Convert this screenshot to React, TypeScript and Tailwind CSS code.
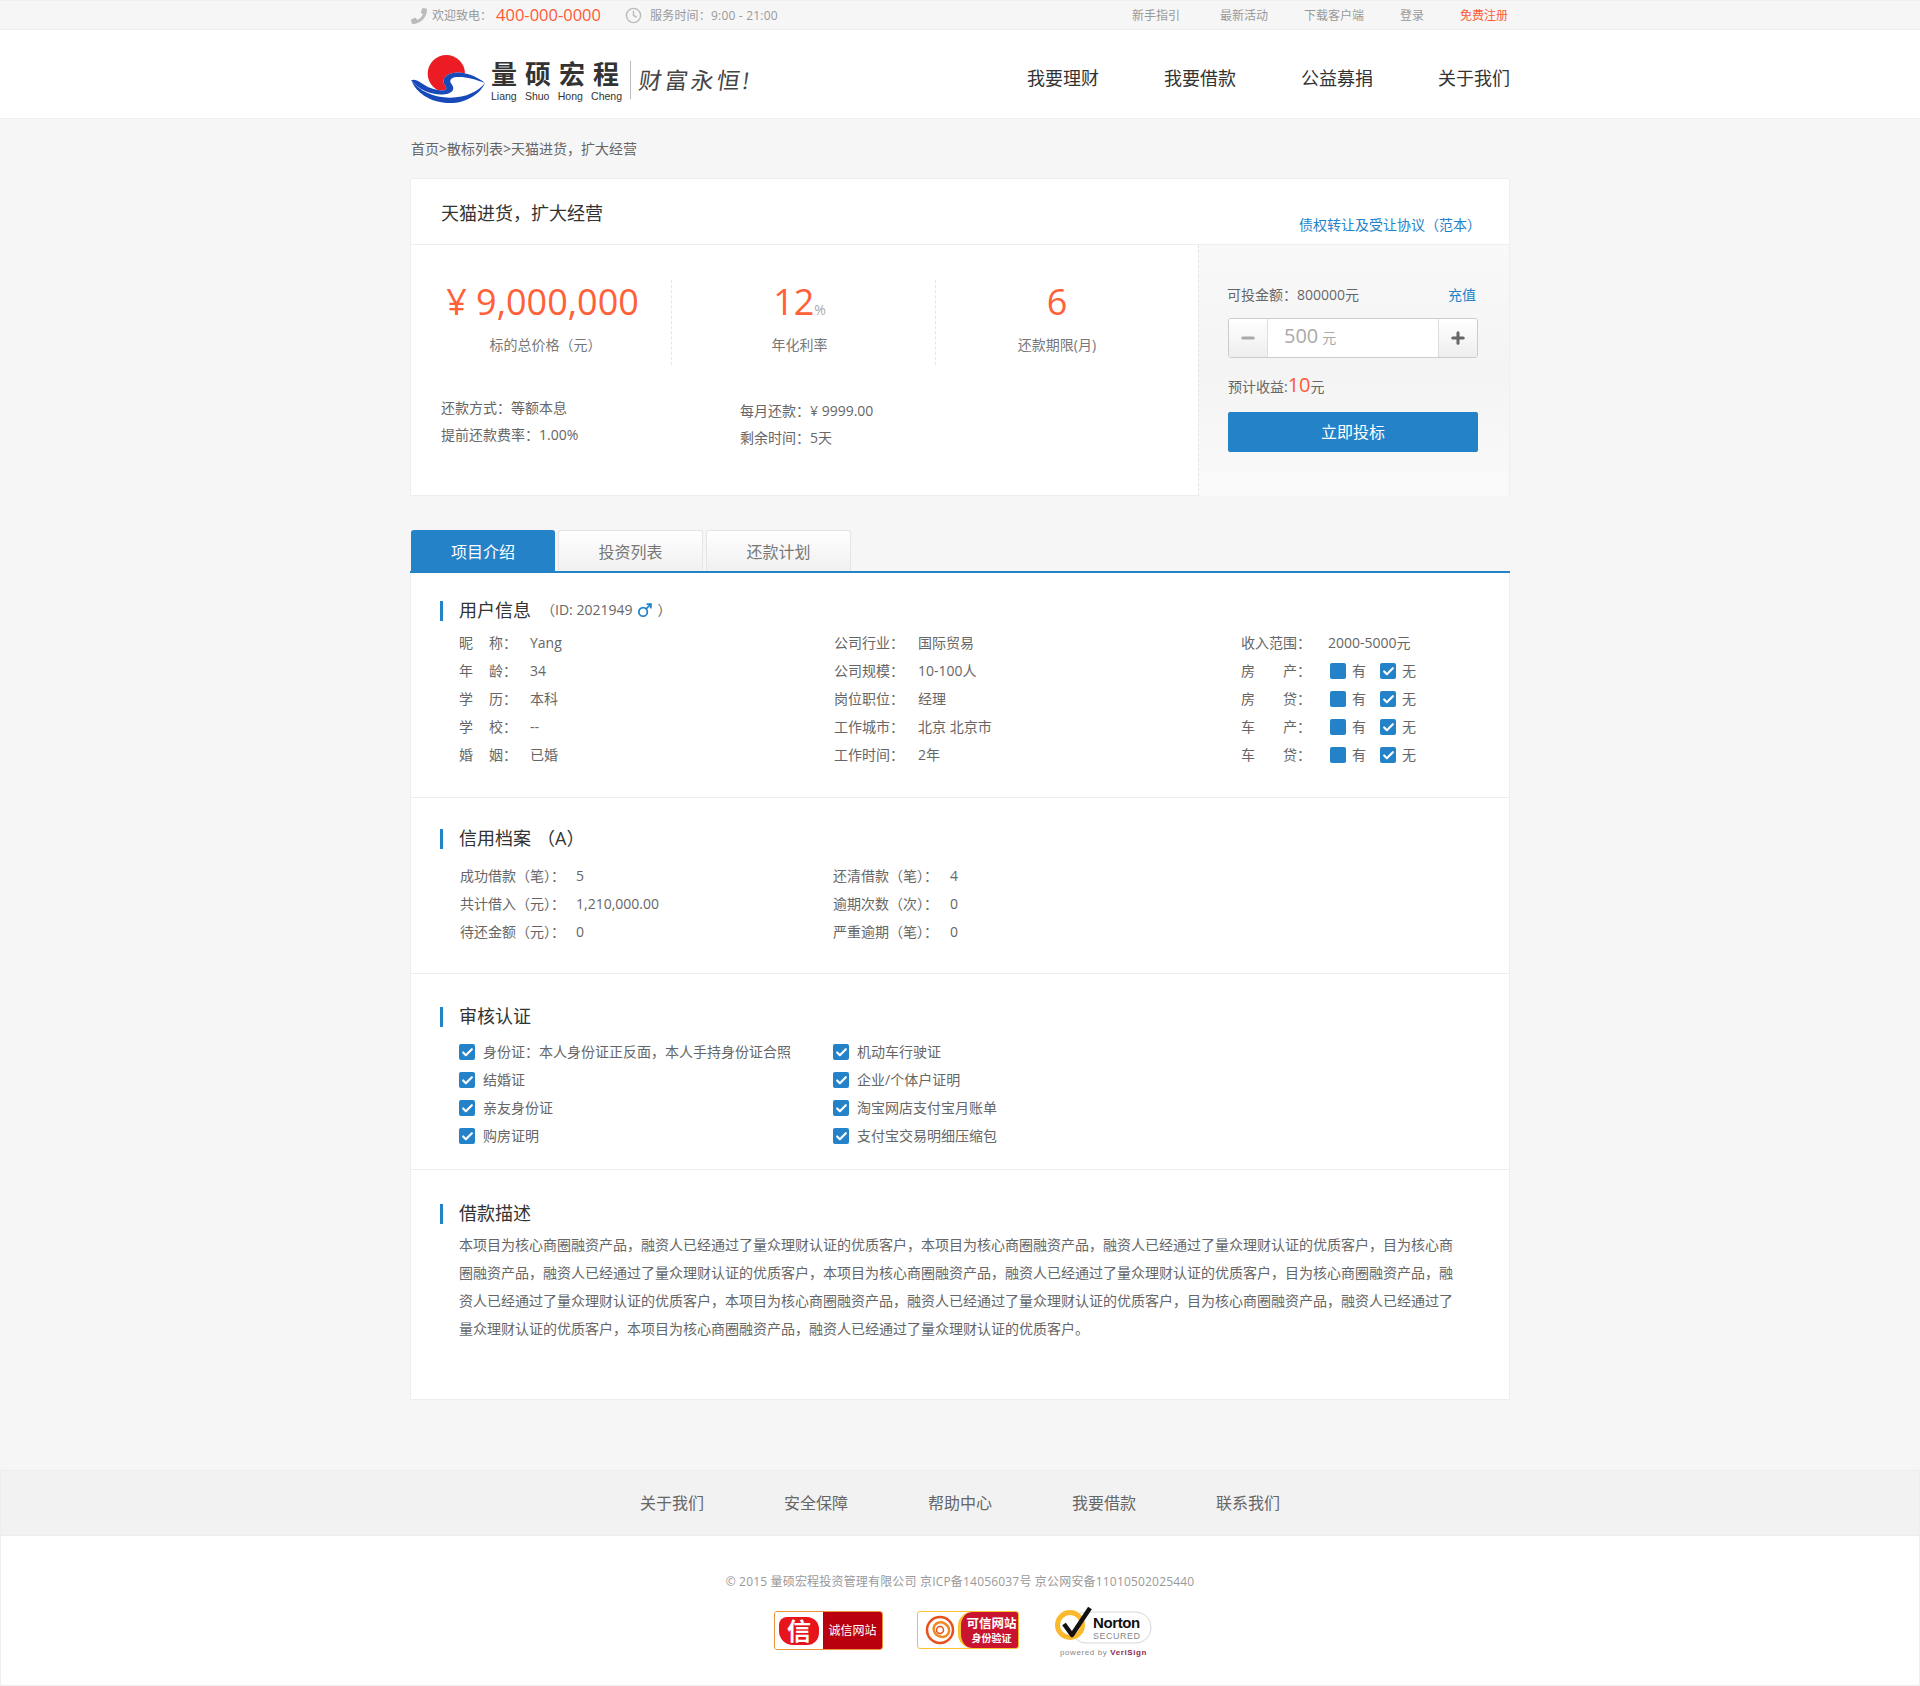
import { Check, Clock, Mars, Minus, Plus } from 'lucide-react';
import { FaPhoneAlt } from 'react-icons/fa';

const userLeft = [
  ['昵', '称：', 'Yang'],
  ['年', '龄：', '34'],
  ['学', '历：', '本科'],
  ['学', '校：', '--'],
  ['婚', '姻：', '已婚'],
];
const userMid = [
  ['公司行业：', '国际贸易'],
  ['公司规模：', '10-100人'],
  ['岗位职位：', '经理'],
  ['工作城市：', '北京 北京市'],
  ['工作时间：', '2年'],
];
const assets = [
  ['房', '产：'],
  ['房', '贷：'],
  ['车', '产：'],
  ['车', '贷：'],
];
const creditLeft = [
  ['成功借款（笔）：', '5'],
  ['共计借入（元）：', '1,210,000.00'],
  ['待还金额（元）：', '0'],
];
const creditRight = [
  ['还清借款（笔）：', '4'],
  ['逾期次数（次）：', '0'],
  ['严重逾期（笔）：', '0'],
];
const auditLeft = ['身份证：本人身份证正反面，本人手持身份证合照', '结婚证', '亲友身份证', '购房证明'];
const auditRight = ['机动车行驶证', '企业/个体户证明', '淘宝网店支付宝月账单', '支付宝交易明细压缩包'];
const desc =
  '本项目为核心商圈融资产品，融资人已经通过了量众理财认证的优质客户，本项目为核心商圈融资产品，融资人已经通过了量众理财认证的优质客户，目为核心商圈融资产品，融资人已经通过了量众理财认证的优质客户，本项目为核心商圈融资产品，融资人已经通过了量众理财认证的优质客户，目为核心商圈融资产品，融资人已经通过了量众理财认证的优质客户，本项目为核心商圈融资产品，融资人已经通过了量众理财认证的优质客户，目为核心商圈融资产品，融资人已经通过了量众理财认证的优质客户，本项目为核心商圈融资产品，融资人已经通过了量众理财认证的优质客户。';

const Box = ({ checked = true }: { checked?: boolean }) => (
  <span className="flex h-4 w-4 shrink-0 items-center justify-center rounded-[2px] bg-[#2482c9]">
    {checked && <Check size={13} strokeWidth={4} className="text-white" />}
  </span>
);

const SectionTitle = ({ children }: { children: React.ReactNode }) => (
  <div className="ml-[29px] flex h-5 items-center border-l-[3px] border-[#2482c9] pb-[2px] pl-4 text-lg text-[#333]">
    {children}
  </div>
);

const Logo = () => (
  <div className="mt-[12px] flex items-center">
    <svg width="75" height="50" viewBox="18 22 225 150">
      <circle cx="124" cy="78" r="56" fill="#ec1c24" />
      <path d="M18 98 C30 92 42 100 55 110 C75 124 100 130 118 128 C128 126 124 118 118 110 C110 96 120 78 150 75 C185 72 220 90 240 106 C240 135 180 170 125 166 C60 160 30 125 18 98 Z" fill="#fff" />
      <path d="M18 98 C30 92 42 100 55 110 C75 124 100 130 118 128 C128 126 124 118 118 110 C110 96 120 78 150 75 C185 72 220 90 240 106 C210 94 180 86 155 88 C135 90 132 100 140 110 C150 124 145 136 120 140 C85 144 45 130 18 98 Z" fill="#1749b8" />
      <path d="M20 100 C30 125 60 160 125 166 C180 170 225 140 240 106 C220 130 185 150 135 150 C85 150 45 130 20 100 Z" fill="#1749b8" />
    </svg>
    <div className="ml-[5px] w-[131px]">
      <div className="text-[26px] leading-[30px] font-bold tracking-[8px] whitespace-nowrap text-[#333]">量硕宏程</div>
      <div className="mt-px flex justify-between font-['Liberation_Sans',sans-serif] text-[10.5px] leading-3 text-[#333]">
        <span>Liang</span>
        <span>Shuo</span>
        <span>Hong</span>
        <span>Cheng</span>
      </div>
    </div>
    <div className="mx-2 h-[38px] w-px bg-[#bbb]" />
    <div className="skew-x-[-8deg] text-[23px] tracking-[3px] whitespace-nowrap text-[#444]">财富永恒!</div>
  </div>
);

const BadgeCredit = () => (
  <div className="flex h-[39px] w-[109px] overflow-hidden rounded-[3px] border border-[#f0923a]">
    <div className="flex w-[48px] items-center justify-center bg-white">
      <span className="flex h-[28px] w-[40px] items-center justify-center rounded-[8px_12px_12px_14px] bg-[#e8141c] text-[24px] leading-none font-bold text-white">
        信
      </span>
    </div>
    <div className="flex flex-1 items-center justify-center bg-[#b8000f] text-[12px] whitespace-nowrap text-white">诚信网站</div>
  </div>
);

const BadgeTrust = () => (
  <div className="flex h-[38px] w-[102px] overflow-hidden rounded-[3px] border border-[#fbc02d] bg-white">
    <div className="flex w-[40px] items-center justify-center pl-1">
      <svg width="30" height="30" viewBox="0 0 30 30" fill="none">
        <circle cx="15" cy="15" r="13" stroke="#e8501c" strokeWidth="2.5" />
        <ellipse cx="16" cy="14" rx="8" ry="7" stroke="#f08a24" strokeWidth="2.5" transform="rotate(30 15 15)" />
        <circle cx="15" cy="15" r="3.5" stroke="#e8501c" strokeWidth="1.5" />
      </svg>
    </div>
    <div className="flex flex-1 flex-col items-center justify-center rounded-l-[14px] border-l-[3px] border-[#fbc02d] bg-[#c8142e] pl-1 whitespace-nowrap text-white">
      <span className="text-[12.5px] leading-[16px] font-bold">可信网站</span>
      <span className="text-[10px] leading-[13px] font-bold">身份验证</span>
    </div>
  </div>
);

const BadgeNorton = () => (
  <div className="flex w-[97px] flex-col items-center">
    <svg width="97" height="42" viewBox="0 0 97 42">
      <rect x="16" y="7" width="80" height="31" rx="15" fill="#fff" stroke="#d8d8d8" />
      <circle cx="15" cy="20" r="12.5" fill="#fff" stroke="#fbb92d" strokeWidth="5" />
      <path d="M9 19 L17 30 L35 3" fill="none" stroke="#111" strokeWidth="4.5" strokeLinejoin="round" />
      <text x="38" y="22.5" fontFamily="Liberation Sans, sans-serif" fontSize="15" fontWeight="700" fill="#111" letterSpacing="-0.4">
        Norton
      </text>
      <text x="38" y="34" fontFamily="Liberation Sans, sans-serif" fontSize="9" fill="#888" letterSpacing="0.5">
        SECURED
      </text>
    </svg>
    <div className="mt-px font-['Liberation_Sans',sans-serif] text-[8px] leading-[10px] tracking-[0.6px] whitespace-nowrap text-[#888]">
      powered by <span className="font-bold text-[#8f2a55]">VeriSign</span>
    </div>
  </div>
);

export default function App() {
  return (
    <div className="min-h-[1686px] bg-[#f6f6f6] font-['Open_Sans','Noto_Sans_CJK_SC',sans-serif] text-[#666]">
      {/* Top bar */}
      <div className="h-[30px] border-y border-t-[#f0f0f0] border-b-[#eee] bg-[#f6f6f6]">
        <div className="mx-auto flex h-full w-[1100px] items-center pt-px pl-px text-xs text-[#999]">
          <FaPhoneAlt size={16} className="-scale-x-100 text-[#bbb]" />
          <span className="ml-[5px]">欢迎致电：</span>
          <span className="ml-[4px] text-[16.5px] leading-none text-[#ff5a36]">400-000-0000</span>
          <Clock size={17} strokeWidth={2} className="ml-6 text-[#bbb]" />
          <span className="ml-2 tracking-[0.2px]">服务时间：9:00 - 21:00</span>
          <div className="ml-auto flex pr-[2px]">
            <span>新手指引</span>
            <span className="ml-10">最新活动</span>
            <span className="ml-9">下载客户端</span>
            <span className="ml-9">登录</span>
            <span className="ml-9 text-[#ff5a36]">免费注册</span>
          </div>
        </div>
      </div>

      {/* Header */}
      <div className="h-[89px] border-b border-[#f0f0f0] bg-white">
        <div className="mx-auto flex h-full w-[1100px] items-center justify-between pl-px">
          <Logo />
          <div className="mt-[7px] flex gap-[65px] text-lg text-[#333]">
            <span>我要理财</span>
            <span>我要借款</span>
            <span>公益募捐</span>
            <span>关于我们</span>
          </div>
        </div>
      </div>

      <div className="mx-auto w-[1100px]">
        <div className="flex h-[59px] items-center pl-px text-sm text-[#666]">首页&gt;散标列表&gt;天猫进货，扩大经营</div>

        {/* Summary card */}
        <div className="h-[318px] border border-[#eee] bg-white">
          <div className="flex h-[66px] justify-between border-b border-[#eee] pl-[30px]">
            <h1 className="pt-[20px] text-lg text-[#333]">天猫进货，扩大经营</h1>
            <a className="pt-[36px] pr-[28px] text-sm text-[#2482c9]">债权转让及受让协议（范本）</a>
          </div>
          <div className="flex h-[251px]">
            <div className="w-[787px] pt-[35px]">
              <div className="flex h-[85px] text-center">
                <div className="w-[261px] border-r border-dashed border-[#e5e5e5] pl-[3px]">
                  <div className="text-4xl leading-[44px] text-[#ff6038]">¥ 9,000,000</div>
                  <div className="mt-[11px] pl-[6px] text-sm text-[#777]">标的总价格（元）</div>
                </div>
                <div className="w-[264px] border-r border-dashed border-[#e5e5e5] pr-[8px]">
                  <div className="text-4xl leading-[44px] text-[#ff6038]">
                    12<span className="text-sm text-[#aaa]">%</span>
                  </div>
                  <div className="mt-[11px] text-sm text-[#777]">年化利率</div>
                </div>
                <div className="w-[242px]">
                  <div className="text-4xl leading-[44px] text-[#ff6038]">6</div>
                  <div className="mt-[11px] text-sm text-[#777]">还款期限(月)</div>
                </div>
              </div>
              <div className="mt-[29px] flex text-sm text-[#666]">
                <div className="ml-[30px] w-[299px]">
                  <div className="leading-[27px]">还款方式：等额本息</div>
                  <div className="leading-[27px]">提前还款费率：1.00%</div>
                </div>
                <div className="mt-[3px]">
                  <div className="leading-[27px]">每月还款：¥ 9999.00</div>
                  <div className="leading-[27px]">剩余时间：5天</div>
                </div>
              </div>
            </div>
            <div className="flex-1 border-l border-dashed border-[#e5e5e5] bg-gradient-to-b from-[#f9f9f9] via-[#f4f4f4] to-[#fbfafa] pt-[40px] pr-[31px] pl-[29px]">
              <div className="flex items-center justify-between text-sm leading-[20px]">
                <span className="ml-[-1px]">可投金额：800000元</span>
                <span className="pr-[2px] text-[#2482c9]">充值</span>
              </div>
              <div className="mt-[13px] flex h-10 overflow-hidden rounded-[3px] border border-[#ccc] bg-white">
                <div className="flex w-[39px] items-center justify-center border-r border-[#ddd] bg-gradient-to-b from-white to-[#eee]">
                  <Minus size={18} strokeWidth={4} className="text-[#aaa]" />
                </div>
                <div className="flex flex-1 items-baseline pt-[3px] pl-[16px] text-[#aaa]">
                  <span className="text-xl">500</span>
                  <span className="ml-1 text-sm">元</span>
                </div>
                <div className="flex w-[39px] items-center justify-center border-l border-[#ddd] bg-gradient-to-b from-white to-[#eee]">
                  <Plus size={18} strokeWidth={4} className="text-[#666]" />
                </div>
              </div>
              <div className="mt-[15px] flex h-[24px] items-baseline text-sm">
                <span>预计收益:</span>
                <span className="text-xl leading-[24px] text-[#ff5a36]">10</span>
                <span>元</span>
              </div>
              <button className="mt-[15px] h-10 w-full rounded-[2px] bg-[#2482c9] text-base text-white">立即投标</button>
            </div>
          </div>
        </div>

        {/* Tabs */}
        <div className="mt-[34px] flex h-[43px] gap-[3px] border-b-2 border-[#2482c9] pl-px text-base">
          <div className="flex h-[41px] w-[144px] items-center justify-center rounded-t-[3px] bg-[#2482c9] pt-[2px] text-white">项目介绍</div>
          <div className="flex h-[41px] w-[145px] items-center justify-center rounded-t-[3px] border border-b-0 border-[#e5e5e5] bg-gradient-to-b from-white to-[#f0f0f0] pt-[2px] text-[#777]">投资列表</div>
          <div className="flex h-[41px] w-[145px] items-center justify-center rounded-t-[3px] border border-b-0 border-[#e5e5e5] bg-gradient-to-b from-white to-[#f0f0f0] pt-[2px] text-[#777]">还款计划</div>
        </div>

        {/* Detail panel */}
        <div className="h-[827px] border border-t-0 border-[#eee] bg-white text-sm text-[#666]">
          <section className="h-[225px] border-b border-[#eee] pt-[28px]">
            <SectionTitle>
              <span>用户信息</span>
              <span className="ml-[10px] flex items-center text-sm text-[#666]">
                （ID: 2021949
                <Mars size={17} strokeWidth={2.5} className="mx-[4px] text-[#2482c9]" />）
              </span>
            </SectionTitle>
            <div className="mt-2 ml-[48px] flex">
              <div className="w-[375px]">
                {userLeft.map(([a, b, v]) => (
                  <div key={a + b} className="flex h-7 items-center">
                    <span className="w-[30px]">{a}</span>
                    <span className="w-[41px]">{b}</span>
                    <span>{v}</span>
                  </div>
                ))}
              </div>
              <div className="w-[407px]">
                {userMid.map(([k, v]) => (
                  <div key={k} className="flex h-7 items-center">
                    <span className="w-[84px]">{k}</span>
                    <span>{v}</span>
                  </div>
                ))}
              </div>
              <div>
                <div className="flex h-7 items-center">
                  <span className="w-[87px]">收入范围：</span>
                  <span>2000-5000元</span>
                </div>
                {assets.map(([a, b]) => (
                  <div key={a + b} className="flex h-7 items-center">
                    <span className="w-[42px]">{a}</span>
                    <span className="w-[47px]">{b}</span>
                    <Box checked={false} />
                    <span className="ml-[6px] w-[28px]">有</span>
                    <Box />
                    <span className="ml-[6px]">无</span>
                  </div>
                ))}
              </div>
            </div>
          </section>

          <section className="h-[176px] border-b border-[#eee] pt-[31px]">
            <SectionTitle>
              <span>信用档案</span>
              <span className="ml-[6px]">（A）</span>
            </SectionTitle>
            <div className="mt-[13px] ml-[49px] flex">
              <div className="w-[373px]">
                {creditLeft.map(([k, v]) => (
                  <div key={k} className="flex h-7 items-center">
                    <span className="w-[116px]">{k}</span>
                    <span>{v}</span>
                  </div>
                ))}
              </div>
              <div>
                {creditRight.map(([k, v]) => (
                  <div key={k} className="flex h-7 items-center">
                    <span className="w-[117px]">{k}</span>
                    <span>{v}</span>
                  </div>
                ))}
              </div>
            </div>
          </section>

          <section className="h-[196px] border-b border-[#eee] pt-[33px]">
            <SectionTitle>审核认证</SectionTitle>
            <div className="mt-[11px] ml-[48px] flex">
              <div className="w-[374px]">
                {auditLeft.map((t) => (
                  <div key={t} className="flex h-7 items-center gap-2">
                    <Box />
                    <span>{t}</span>
                  </div>
                ))}
              </div>
              <div>
                {auditRight.map((t) => (
                  <div key={t} className="flex h-7 items-center gap-2">
                    <Box />
                    <span>{t}</span>
                  </div>
                ))}
              </div>
            </div>
          </section>

          <section className="pt-[34px]">
            <SectionTitle>借款描述</SectionTitle>
            <p className="mt-[7px] ml-[48px] w-[1000px] leading-7">{desc}</p>
          </section>
        </div>
      </div>

      {/* Footer */}
      <div className="mt-[70px] h-[216px] border-x border-b border-[#eee] bg-white">
        <div className="flex h-[66px] items-center justify-center gap-20 border-y border-[#eee] bg-[#f2f2f2] text-base text-[#666]">
          <span>关于我们</span>
          <span>安全保障</span>
          <span>帮助中心</span>
          <span>我要借款</span>
          <span>联系我们</span>
        </div>
        <div className="pt-[37px] text-center text-xs leading-[18px] tracking-[0.18px] text-[#999]">© 2015 量硕宏程投资管理有限公司 京ICP备14056037号 京公网安备11010502025440</div>
        <div className="mt-[14px] flex items-start justify-center pl-[6px]">
          <div className="mt-[6px] mr-[34px]">
            <BadgeCredit />
          </div>
          <div className="mt-[6px] mr-[36px]">
            <BadgeTrust />
          </div>
          <BadgeNorton />
        </div>
      </div>
    </div>
  );
}
